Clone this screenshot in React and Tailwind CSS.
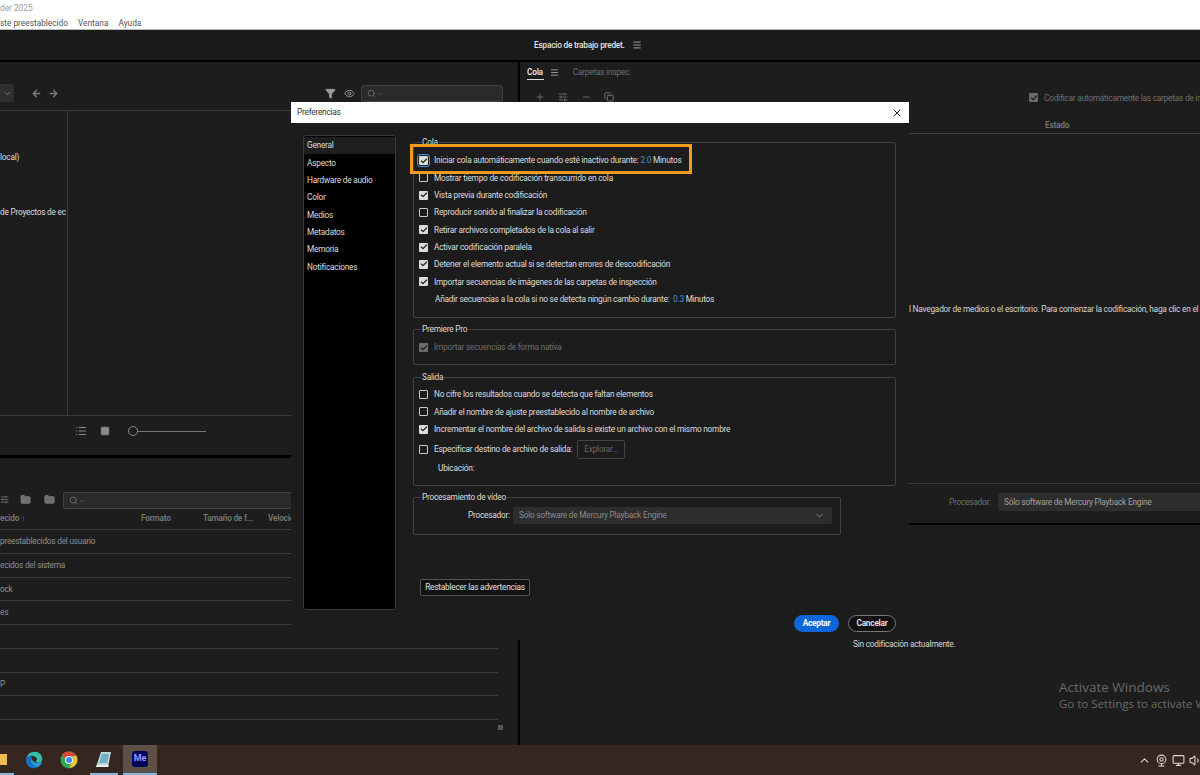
import React from 'react';
import { ArrowLeft, ArrowRight, Check, ChevronDown, ChevronUp, Eye, Funnel, List, Menu, Minus, Monitor, Plus, Search, SlidersHorizontal, Square, Volume1, Webcam, X, Copy, FolderInput, FolderPlus } from 'lucide-react';

const font = { fontFamily: 'Roboto, "Liberation Sans", sans-serif' };

const SearchField = ({ className }) => (
  <div className={`flex items-center gap-px rounded-[2px] border border-[#414141] bg-[#2a2a2a] pl-[5px] text-[#777] ${className}`}>
    <Search size={9} />
    <ChevronDown size={6} />
  </div>
);

const Checkbox = ({ checked, disabled, focused }) => (
  <span className={`flex h-[9px] w-[9px] shrink-0 items-center justify-center rounded-[1px] ${checked ? (disabled ? 'bg-[#6b6b6b]' : 'bg-[#dcdcdc]') : 'border border-[#c8c8c8]'} ${focused ? 'outline outline-[1.5px] outline-offset-[1px] outline-[#4b8fe0]' : ''}`}>
    {checked && <Check size={8} strokeWidth={3.5} className="text-[#1b1b1b]" />}
  </span>
);

const Row = ({ checked, disabled, focused, children }) => (
  <div className={`flex h-[17.3px] items-center gap-[6px] ${disabled ? 'text-[#6d6d6d]' : 'text-[#dcdcdc]'}`}>
    <Checkbox checked={checked} disabled={disabled} focused={focused} />
    <span className="whitespace-nowrap">{children}</span>
  </div>
);

const Group = ({ title, className, children }) => (
  <fieldset className={`rounded-[2px] border border-[#414141] ${className}`}>
    <legend className="ml-[7px] px-[1px] leading-[12px] text-[#dcdcdc]">{title}</legend>
    <div className="pl-[5px]">{children}</div>
  </fieldset>
);

const presetRows = ['preestablecidos del usuario', 'ecidos del sistema', 'ock', 'es', '', '', 'P', ''];
const rowHeights = ['h-[24px]', 'h-[24px]', 'h-[23px]', 'h-[24px]', 'h-[24px]', 'h-[24px]', 'h-[23px]', 'h-[24px]'];
const sections = ['General', 'Aspecto', 'Hardware de audio', 'Color', 'Medios', 'Metadatos', 'Memoria', 'Notificaciones'];

const LeftPanels = () => (
  <div className="flex w-[518px] shrink-0 flex-col gap-[3px]">
    <div className="flex h-[393px] flex-col bg-[#1d1d1d]">
      <div className="flex h-[49px] items-end border-b border-[#3c3c3c] pb-[8px]">
        <div className="flex h-[18px] w-[14px] items-center justify-end rounded-r-[2px] bg-[#2f2f2f] pr-[2px] text-[#999]">
          <ChevronDown size={9} />
        </div>
        <ArrowLeft size={11} strokeWidth={3} className="mb-[3px] ml-[17px] text-[#7d7d7d]" />
        <ArrowRight size={11} strokeWidth={3} className="mb-[3px] ml-[6px] text-[#7d7d7d]" />
        <Funnel size={11} className="mb-[3px] ml-[266px] fill-[#9a9a9a] text-[#9a9a9a]" />
        <Eye size={11} className="mb-[3px] ml-[8px] text-[#9a9a9a]" />
        <SearchField className="ml-[6px] h-[17px] w-[142px]" />
      </div>
      <div className="flex h-[305px] border-b border-[#3c3c3c]">
        <div className="w-[68px] overflow-hidden whitespace-nowrap border-r border-[#3c3c3c] text-[#dcdcdc]">
          <div className="mt-[40px] leading-[12px]">local)</div>
          <div className="mt-[43px] leading-[12px]">de Proyectos de ec</div>
        </div>
      </div>
      <div className="flex h-[30px] items-center pl-[75px] text-[#8a8a8a]">
        <List size={12} />
        <Square size={10} className="ml-[13px] fill-[#8a8a8a]" />
        <span className="ml-[18px] h-[10px] w-[10px] rounded-full border border-[#8a8a8a]" />
        <span className="h-px w-[68px] bg-[#777]" />
      </div>
    </div>
    <div className="flex flex-1 flex-col overflow-hidden bg-[#1d1d1d]">
      <div className="flex h-[53px] shrink-0 items-end pb-[2px] text-[#7d7d7d]">
        <SlidersHorizontal size={9} className="mb-[5px]" />
        <FolderInput size={11} className="mb-[4px] ml-[11px] fill-[#6e6e6e]" />
        <FolderPlus size={11} className="mb-[4px] ml-[13px] fill-[#6e6e6e]" />
        <SearchField className="ml-[8px] h-[17px] w-[240px]" />
      </div>
      <div className="flex h-[19px] w-[498px] shrink-0 items-center border-b border-[#3c3c3c] pb-[4px] font-semibold text-[#777]">
        <span className="w-[141px] whitespace-nowrap">ecido ↑</span>
        <span className="w-[62px]">Formato</span>
        <span className="w-[65px] whitespace-nowrap">Tamaño de f...</span>
        <span>Velocidad</span>
      </div>
      {presetRows.map((text, i) => (
        <div key={i} className={`flex w-[498px] shrink-0 items-center border-b border-[#3c3c3c] text-[#8f8f8f] ${rowHeights[i]}`}>
          {text}
        </div>
      ))}
      <div className="flex h-[14px] w-[503px] shrink-0 items-center justify-end">
        <span className="h-[5px] w-[5px] bg-[#555]" />
      </div>
    </div>
  </div>
);

const RightPanels = () => (
  <div className="flex flex-1 flex-col gap-[2px]">
    <div className="flex h-[461px] flex-col bg-[#1d1d1d]">
      <div className="flex h-[18px] items-end gap-[5px] pl-[7px]">
        <span className="border-b border-[#dcdcdc] pb-[1px] pr-[1px] font-semibold text-[#e4e4e4]">Cola</span>
        <Menu size={9} className="mb-[3px] ml-[1px] text-[#bdbdbd]" />
        <span className="ml-[9px] pb-[2px] text-[#6f6f6f]">Carpetas inspec.</span>
      </div>
      <div className="flex h-[22px] items-end pl-[15px] text-[#7a7a7a]">
        <Plus size={10} />
        <SlidersHorizontal size={10} className="ml-[13px]" />
        <Minus size={10} className="ml-[13px]" />
        <Copy size={10} className="ml-[13px]" />
        <span className="-mb-[2px] ml-[415px] flex items-center gap-[6px] whitespace-nowrap text-[#6f6f6f]">
          <Checkbox checked disabled />
          Codificar automáticamente las carpetas de inspección
        </span>
      </div>
      <div className="flex h-[32px] items-end border-b border-[#3c3c3c] pb-[2px] pl-[525px] font-semibold text-[#777]">Estado</div>
      <div className="h-[169px] shrink-0" />
      <div className="overflow-hidden whitespace-nowrap pl-[389px] leading-[12px] text-[#d6d6d6]">l Navegador de medios o el escritorio. Para comenzar la codificación, haga clic en el botón</div>
      <div className="h-[169px] shrink-0 border-b border-[#3c3c3c]" />
      <div className="flex items-center pl-[429px] pt-[9px] text-[#707070]">
        <span className="w-[49px]">Procesador:</span>
        <div className="flex h-[18px] flex-1 items-center rounded-l-[2px] bg-[#2d2d2d] pl-[6px] text-[#a0a0a0]">Sólo software de Mercury Playback Engine</div>
      </div>
    </div>
    <div className="flex-1 bg-[#1d1d1d] pl-[333px] pt-[113px] leading-[12px] text-[#d6d6d6]">Sin codificación actualmente.</div>
  </div>
);

const Preferences = () => (
  <div className="absolute left-[291px] top-[102px] flex h-[538px] w-[618px] flex-col bg-[#1c1c1c] text-[#dcdcdc]">
    <div className="flex h-[21px] shrink-0 items-center justify-between bg-white px-[6px] text-[#333]">
      <span>Preferencias</span>
      <X size={12} className="text-[#222]" />
    </div>
    <div className="flex flex-1 pl-[12px] pt-[12px]">
      <div className="h-[475px] w-[93px] shrink-0 overflow-hidden rounded-[3px] border border-[#3a3a3a] bg-black pt-[1px]">
        {sections.map((s, i) => (
          <div key={s} className={`flex h-[17.3px] items-center pl-[3px] ${i === 0 ? 'bg-[#1e1e1e]' : ''}`}>{s}</div>
        ))}
      </div>
      <div className="ml-[17px] mt-[1px] w-[483px]">
        <Group title="Cola" className="h-[182px]">
          <div className="pt-[4px]">
            <Row checked focused>
              Iniciar cola automáticamente cuando esté inactivo durante: <span className="text-[#4f8fdc]">2.0</span> Minutos
            </Row>
            <Row>Mostrar tiempo de codificación transcurrido en cola</Row>
            <Row checked>Vista previa durante codificación</Row>
            <Row>Reproducir sonido al finalizar la codificación</Row>
            <Row checked>Retirar archivos completados de la cola al salir</Row>
            <Row checked>Activar codificación paralela</Row>
            <Row checked>Detener el elemento actual si se detectan errores de descodificación</Row>
            <Row checked>Importar secuencias de imágenes de las carpetas de inspección</Row>
            <div className="flex h-[17.3px] items-center whitespace-nowrap pl-[16px]">
              Añadir secuencias a la cola si no se detecta ningún cambio durante:&nbsp;&nbsp;<span className="text-[#4f8fdc]">0.3</span>&nbsp;Minutos
            </div>
          </div>
        </Group>
        <Group title="Premiere Pro" className="mt-[5px] h-[42px]">
          <div className="pt-[4px]">
            <Row checked disabled>Importar secuencias de forma nativa</Row>
          </div>
        </Group>
        <Group title="Salida" className="mt-[6px] h-[115px]">
          <div className="pt-[3px]">
            <Row>No cifre los resultados cuando se detecta que faltan elementos</Row>
            <Row>Añadir el nombre de ajuste preestablecido al nombre de archivo</Row>
            <Row checked>Incrementar el nombre del archivo de salida si existe un archivo con el mismo nombre</Row>
            <div className="flex h-[23px] items-center gap-[6px]">
              <Checkbox />
              <span>Especificar destino de archivo de salida:</span>
              <span className="-ml-[1px] rounded-[2px] border border-[#444] px-[6px] py-[2px] text-[#666]">Explorar...</span>
            </div>
            <div className="pl-[19px] pt-[1px]">Ubicación:</div>
          </div>
        </Group>
        <Group title="Procesamiento de vídeo" className="mt-[5px] h-[44px] w-[428px]">
          <div className="flex items-center pl-[49px] pt-[4px]">
            <span className="w-[42px] whitespace-nowrap">Procesador:</span>
            <div className="ml-[3px] flex h-[17px] w-[319px] items-center justify-between rounded-[2px] bg-[#2d2d2d] pl-[6px] pr-[7px] text-[#8a8a8a]">
              Sólo software de Mercury Playback Engine
              <ChevronDown size={11} />
            </div>
          </div>
        </Group>
        <button className="ml-[7px] mt-[44px] block h-[17px] w-[110px] whitespace-nowrap rounded-[2px] border border-[#555] bg-[#111] text-[#e0e0e0]">Restablecer las advertencias</button>
        <div className="mt-[19px] flex justify-end gap-[9px]">
          <button className="h-[17px] w-[45px] rounded-full bg-[#0d66d8] font-bold text-white">Aceptar</button>
          <button className="h-[17px] w-[48px] rounded-full border border-[#777] bg-[#111] font-semibold text-[#e8e8e8]">Cancelar</button>
        </div>
      </div>
    </div>
  </div>
);

const EdgeIcon = () => (
  <svg width="18" height="18" viewBox="0 0 18 18">
    <path d="M1 8.500C2 3.500 5.500.8 9.300.8c4.700 0 8 3.400 8 7.500 0 2.300-1.800 3.400-3.800 3.400-1.500 0-2.700-.5-3-1.200 2-.7 2.300-4-1-5C6 3.800 2.500 5 1 8.500z" fill="#35c1a6" />
    <path d="M1 8.500C2.500 5 6 3.800 8.500 4.500 6 5.500 5 8 6 11c1 2.800 3.800 5 7 5-1.300.9-2.800 1.400-4.300 1.400C4.300 17.400.6 13.500 1 8.500z" fill="#1570c9" />
    <path d="M13 16c-3.200 0-6-2.200-7-5-.6-1.800-.5-3.200 0-4.300C8 11 11 13.500 17 11c-.5 2-2 4-4 5z" fill="#2a9be0" />
  </svg>
);

const ChromeIcon = () => (
  <svg width="18" height="18" viewBox="0 0 18 18">
    <circle cx="9" cy="9" r="8.500" fill="#2fa84f" />
    <path d="M9 .5A8.500 8.500 0 0 1 16.400 5H9a4 4 0 0 0-3.900 3L2 3.300A8.500 8.500 0 0 1 9 .5z" fill="#dc4437" />
    <path d="M16.400 5A8.500 8.500 0 0 1 9 17.500L12.400 11A4 4 0 0 0 12 6z" fill="#f5c033" transform="translate(0 -.5)" />
    <circle cx="9" cy="9" r="4" fill="#fff" />
    <circle cx="9" cy="9" r="3" fill="#4285f4" />
  </svg>
);

const NotepadIcon = () => (
  <svg width="18" height="18" viewBox="0 0 18 18">
    <path d="M6 1h10l-3 15H1z" fill="#bcd6d2" />
    <path d="M7 3h7l-2 9H4z" fill="#6fb0c8" />
    <path d="M1 16h12l1-2H2z" fill="#e9efee" />
  </svg>
);

const Taskbar = () => (
  <div className="relative flex h-[30px] shrink-0 items-center bg-[#36261f]">
    <div className="flex h-full w-[14px] flex-col justify-between">
      <span className="mt-[9px] h-[11px] w-[7px] bg-[#eebd4d]" />
      <span className="h-[2px] bg-[#7fb7e2]" />
    </div>
    <div className="ml-[11px] flex h-full w-[18px] items-center"><EdgeIcon /></div>
    <div className="ml-[17px] flex h-full w-[18px] items-center"><ChromeIcon /></div>
    <div className="ml-[12px] flex h-full w-[28px] flex-col items-center justify-between">
      <span className="mt-[6px]"><NotepadIcon /></span>
      <span className="h-[2px] w-full bg-[#7fb7e2]" />
    </div>
    <div className="ml-[5px] flex h-full w-[34px] flex-col items-center justify-between bg-[#5e5047]">
      <span className="mt-[6px] flex h-[16px] w-[16px] items-center justify-center rounded-[3px] bg-[#00005b] text-[9px] font-bold tracking-normal text-[#9999ff]">Me</span>
      <span className="h-[2px] w-full bg-[#7fb7e2]" />
    </div>
    <div className="-mr-[2px] ml-auto flex items-center gap-[4px] text-[#d8d8d8]">
      <ChevronUp size={13} />
      <Webcam size={13} />
      <Monitor size={13} />
      <Volume1 size={13} />
    </div>
  </div>
);

export default function App() {
  return (
    <div className="relative flex h-[775px] w-[1200px] flex-col overflow-hidden bg-black text-[8.3px] tracking-[-0.23px]" style={font}>
      <div className="h-[30px] shrink-0 border-b border-[#bbb] bg-white tracking-normal">
        <div className="h-[15px] pt-[2px] leading-[12px] text-[#999]">der 2025</div>
        <div className="flex gap-[10px] pt-[1px] leading-[14px] text-[#555]">
          <span>ste preestablecido</span>
          <span>Ventana</span>
          <span>Ayuda</span>
        </div>
      </div>
      <div className="flex h-[30px] shrink-0 items-center bg-[#1a1a1a] pl-[534px] text-[#e2e2e2]">
        <span className="font-medium">Espacio de trabajo predet.</span>
        <Menu size={10} className="ml-[7px] text-[#bbb]" />
      </div>
      <div className="flex h-[685px] gap-[2px] pt-[2px]">
        <LeftPanels />
        <RightPanels />
      </div>
      <Taskbar />

      <Preferences />

      {/* highlight drawn over the first option */}
      <div className="absolute left-[410px] top-[144px] h-[30px] w-[282px] border-[3.5px] border-[#f39a1f]" />

      {/* windows activation watermark */}
      <div className="pointer-events-none absolute left-[1059px] top-[679px] whitespace-nowrap tracking-normal text-[#6a6a6a]" style={{ fontFamily: '"Open Sans", sans-serif' }}>
        <div className="text-[13.5px] leading-[17px]">Activate Windows</div>
        <div className="text-[11.5px] leading-[15px]">Go to Settings to activate Windows.</div>
      </div>
    </div>
  );
}
